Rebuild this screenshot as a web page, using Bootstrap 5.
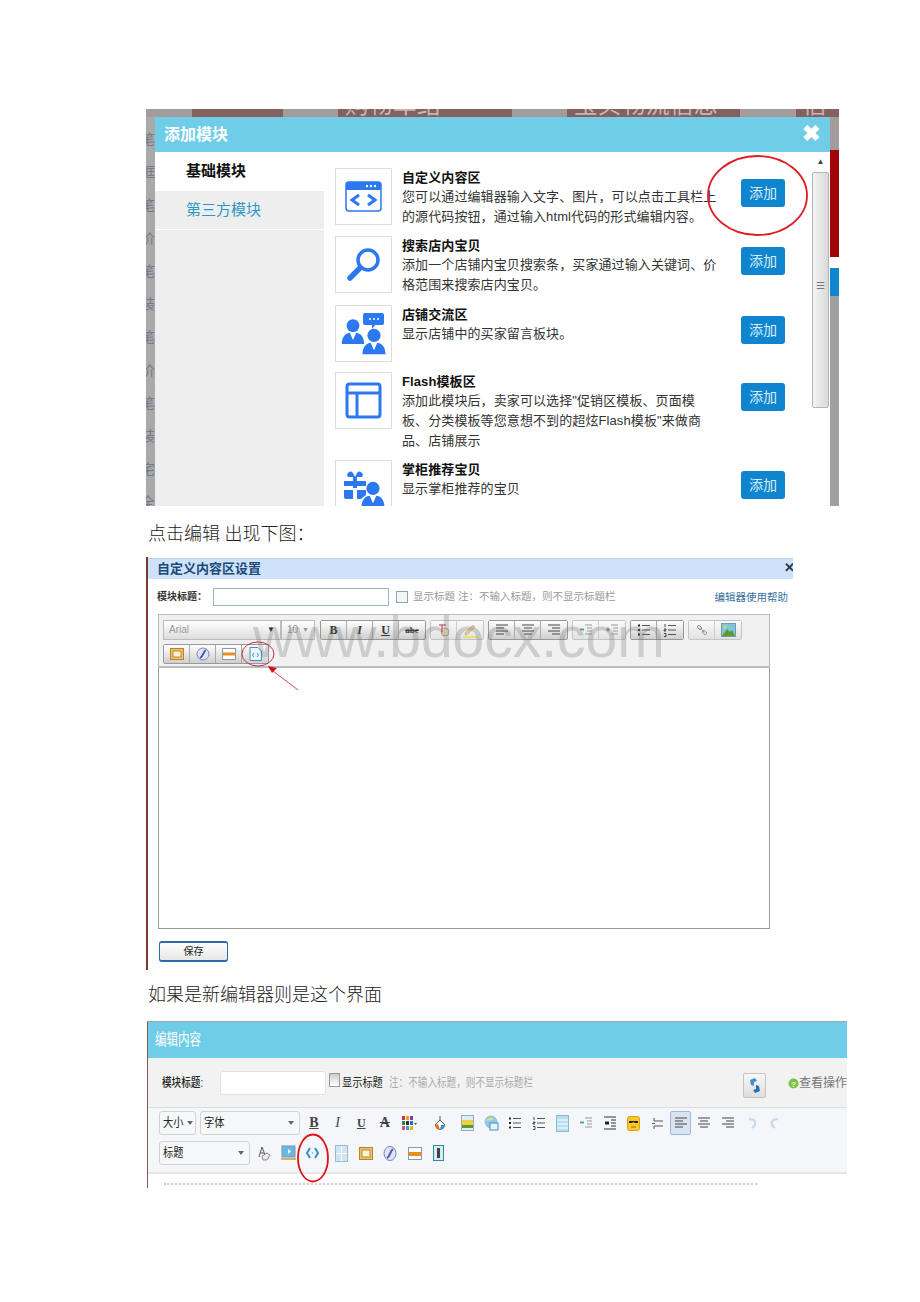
<!DOCTYPE html>
<html lang="zh-CN">

<head>
    <meta charset="UTF-8">
    <meta name="viewport" content="width=device-width, initial-scale=1.0">
    <title>添加模块</title>
    <link href="https://cdn.jsdelivr.net/npm/bootstrap@5.3.0/dist/css/bootstrap.min.css" rel="stylesheet">
    <style>
        body {
            background: #fff;
            color: #222;
            font-family: "Liberation Sans", "Noto Sans CJK SC", sans-serif;
            min-height: 1302px;
            padding-top: 109px;
        }
        .doc-line {
            margin: 0 0 0 148px;
            height: 24px;
            line-height: 24px;
            font-size: 18px;
            font-weight: 300;
            color: #222;
            font-family: "Liberation Serif", "Noto Sans CJK SC", serif;
        }

        /* first screenshot */
        .shot-add {
            position: relative;
            margin-left: 146px;
            width: 693px;
            height: 397px;
            overflow: hidden;
            background: #a8a8a8;
        }
        .back-top { height: 8px; overflow: hidden; }
        .back-top span { display: block; height: 8px; overflow: hidden; }
        .back-top b { display: block; margin-top: -16px; font-size: 24px; line-height: 24px; font-weight: 400; color: #c9b5b5; white-space: nowrap; }
        .seg-gray { background: #a49c9c; }
        .seg-brown { background: #846060; }
        .side-chars { width: 9px; overflow: hidden; font-size: 14px; line-height: 33px; color: #747a88; padding-top: 6px; background: #a9a9a9; }
        .side-chars div { margin-left: -5px; }
        .side-right { width: 9px; }
        .side-right i { display: block; }
        .add-modal { width: 675px; height: 389px; background: #fff; }
        .add-head { height: 35px; background: #6fcde8; color: #fff; font-size: 16px; font-weight: 700; line-height: 35px; padding-left: 9px; position: relative; }
        .add-close { position: absolute; right: 10px; top: 0; font-size: 22px; line-height: 33px; }
        .add-side { width: 169px; background: #eee; font-size: 15px; }
        .add-side div { padding-left: 31px; }
        .tab-on { height: 39px; line-height: 38px; background: #fff; font-weight: 700; color: #111; }
        .tab-off { height: 39px; line-height: 38px; color: #2b97c4; border-bottom: 1px solid #fff; }
        .mod-list { width: 488px; padding: 16px 0 0 11px; overflow: hidden; }
        .mod-row { width: 466px; }
        .mod-row.r1 { height: 68px; }
        .mod-row.r2 { height: 69px; }
        .mod-row.r3 { height: 67px; }
        .mod-row.r4 { height: 88px; }
        .mod-icon { width: 57px; height: 57px; flex: none; border: 1px solid #ddd; }
        .mod-text { width: 339px; flex: none; margin-left: 10px; font-size: 13px; line-height: 20px; letter-spacing: .1px; color: #333; }
        .mod-text strong { display: block; color: #111; line-height: 19px; }
        .mod-add.btn { width: 44px; height: 28px; flex: none; margin-top: 11px; padding: 0; border: 0; border-radius: 3px; background: #0f85cf; color: #d9eef9; font-size: 14px; line-height: 28px; }
        .scroll-col { width: 17px; margin-left: 0; background: #fff; }
        .scroll-up { height: 20px; font-size: 8px; line-height: 20px; text-align: center; color: #444; }
        .scroll-thumb { height: 236px; border: 1px solid #b5b5b5; border-radius: 2px; background: linear-gradient(90deg, #f4f4f4, #d9d9d9); font-size: 10px; text-align: center; }
        .scroll-thumb span { display: block; margin-top: 105px; color: #777; }
        .red-mark { position: absolute; overflow: visible; pointer-events: none; }

        /* second screenshot */
        .shot-old {
            position: relative;
            margin-left: 146px;
            width: 647px;
            height: 413px;
            overflow: hidden;
            border-left: 2px solid #7a3a30;
            font-size: 10px;
        }
        .old-head { height: 21px; margin-top: 1px; border-top: 1px solid #b8d4e4; background: #cfe2fb; padding-left: 9px; font-size: 13px; line-height: 20px; font-weight: 700; color: #1b4a78; }
        .old-close { position: absolute; right: -2px; top: 1px; font-size: 13px; font-weight: 700; line-height: 20px; color: #1b3a58; }
        .old-title { height: 35px; padding-left: 9px; }
        .old-label { font-weight: 700; font-size: 10px; color: #333; }
        .old-input { width: 176px; height: 18px; margin-left: 0; border: 1px solid #9db6c4; }
        .old-check { width: 12px; height: 12px; margin-left: 7px; border: 1px solid #8aa; background: #f6f6f6; }
        .old-hint { margin-left: 5px; color: #999; font-size: 10.5px; }
        .old-help { position: absolute; right: 5px; top: 33px; color: #36719e; font-size: 10.5px; }
        .old-tools { width: 612px; height: 54px; margin-left: 10px; padding: 5px 0 0 4px; background: #f1f1f1; border: 1px solid #bbb; border-bottom: 2px solid #bbb; }
        .tool-row { height: 20px; margin-bottom: 4px; }
        .old-select { height: 20px; border: 1px solid #bbb; background: linear-gradient(#fff, #ddd); color: #999; font-size: 10px; line-height: 18px; padding: 0 5px; }
        .old-select.s1 { width: 118px; }
        .old-select.s2 { width: 34px; margin-right: 5px; }
        .tool-group { height: 20px; margin-right: 4px; border: 1px solid #999; border-radius: 2px; }
        .tool-group.dim { border-color: #c4c4c4; }
        .tool-btn { width: 26px; height: 18px; background: linear-gradient(#fff, #cfcfcf); border-right: 1px solid #aaa; color: #333; font: 700 12px "Liberation Serif", serif; }
        .tool-btn:last-child { border-right: 0; }
        .dim .tool-btn { border-right-color: #ccc; background: linear-gradient(#fafafa, #e2e2e2); }
        .old-area { width: 612px; height: 261px; margin-left: 10px; border: 1px solid #999; border-top: 0; background: #fff; }
        .old-save.btn { display: block; width: 69px; height: 21px; margin: 12px 0 0 11px; padding: 0; border: 1px solid #2d6aa3; border-width: 2px 1px; border-radius: 3px; background: linear-gradient(#fff, #e6e6e6); color: #222; font-size: 10px; line-height: 17px; }
        .mark-text { position: absolute; left: 105px; top: 50px; font-size: 57px; line-height: 60px; color: rgba(110, 110, 110, .28); white-space: nowrap; pointer-events: none; }

        /* third screenshot */
        .shot-new {
            position: relative;
            margin-left: 147px;
            width: 700px;
            height: 167px;
            overflow: hidden;
            border-left: 1px solid #8a5a50;
            border-top: 1px solid #9aa;
        }
        /* the picture is squeezed sideways, so its text is narrow */
        .squeeze { display: inline-block; transform-origin: left center; white-space: nowrap; }
        .sq72 { transform: scaleX(.72); }
        .sq80 { transform: scaleX(.8); }
        .sq85 { transform: scaleX(.85); }
        .new-head { height: 36px; background: #70cde8; color: #fff; font-size: 16px; line-height: 35px; padding-left: 7px; }
        .new-title { height: 50px; background: #f2f2f2; border-bottom: 1px solid #d8dde2; padding-left: 14px; }
        .new-label { width: 58px; font-size: 12px; color: #222; font-weight: 500; }
        .new-input { width: 106px; height: 24px; background: #fff; border: 1px solid #e2e2e2; border-radius: 3px; }
        .new-check { width: 11px; height: 14px; margin: -5px 2px 0 3px; border: 1px solid #999; background: linear-gradient(#ccc, #fff); }
        .new-show { width: 48px; font-size: 12px; color: #222; }
        .new-note { margin-left: -1px; font-size: 12px; color: #aaa; }
        .new-sync { position: absolute; left: 595px; top: 51px; width: 23px; height: 25px; border: 1px solid #c4c4c4; border-radius: 2px; background: linear-gradient(#f8f8f8, #ddd); }
        .new-help { position: absolute; left: 640px; top: 52px; font-size: 12px; color: #777; white-space: nowrap; }
        .new-tools { height: 66px; background: #f4f6fa; border-bottom: 2px solid #e4e6ea; padding: 3px 0 0 11px; }
        .new-row { height: 24px; margin-bottom: 6px; }
        .new-select { height: 24px; margin-right: 4px; padding: 0 5px 0 3px; background: #f7f8fa; border: 1px solid #cfd2d6; border-radius: 3px; font-size: 12px; color: #222; }
        .new-select::after { content: ""; border: 3px solid transparent; border-top: 4px solid #666; border-bottom: 0; }
        .new-select.w36 { width: 37px; }
        .new-select.w100 { width: 100px; margin-right: 2px; }
        .new-select.w91 { width: 91px; margin-right: 2px; }
        .new-tool { width: 23.7px; height: 24px; flex: none; color: #444; font: 700 14px "Liberation Serif", serif; }
        .new-tool.sel { width: 21px; margin: 0 1px; background: #d9e3f2; border: 1px solid #9db7d8; border-radius: 2px; }
        .row-two .new-tool { width: 24.4px; }
        .new-area { height: 14px; background: #fff; padding: 9px 0 0 16px; }
        .new-dots { width: 593px; height: 2px; border-top: 2px dotted #cfcfcf; }
    </style>
</head>

<body>
    <svg width="0" height="0" class="d-block">
        <symbol id="i-lines-left" viewBox="0 0 14 14"><path d="M1 2h12M1 5h8M1 8h12M1 11h8" stroke="#444" fill="none"/></symbol>
        <symbol id="i-lines-center" viewBox="0 0 14 14"><path d="M1 2h12M3 5h8M1 8h12M3 11h8" stroke="#444" fill="none"/></symbol>
        <symbol id="i-lines-right" viewBox="0 0 14 14"><path d="M1 2h12M5 5h8M1 8h12M5 11h8" stroke="#444" fill="none"/></symbol>
        <symbol id="i-outdent" viewBox="0 0 14 14"><path d="M6 2h7M8 5h5M8 8h5M6 11h7" stroke="#999" fill="none"/><path d="M1 6.500h4" stroke="#5a8" stroke-width="2"/></symbol>
        <symbol id="i-indent" viewBox="0 0 14 14"><path d="M6 2h7M8 5h5M8 8h5M6 11h7" stroke="#999" fill="none"/><path d="M1 6.500h4M3 4.500v4" stroke="#5a8" stroke-width="1.500"/></symbol>
        <symbol id="i-bullets" viewBox="0 0 14 14"><path d="M5 2.500h8M5 7h8M5 11.500h8" stroke="#555" fill="none"/><path d="M1 1.500h2v2H1zM1 6h2v2H1zM1 10.500h2v2H1z" fill="#222"/></symbol>
        <symbol id="i-numbers" viewBox="0 0 14 14"><path d="M5 2.500h8M5 7h8M5 11.500h8" stroke="#555" fill="none"/><path d="M2 1v3M1 6h2v1H1v1h2M1 10.500h2v3H1" stroke="#222" stroke-width=".8" fill="none"/></symbol>
        <symbol id="i-person" viewBox="0 0 30 34"><circle cx="15" cy="9" r="8" fill="#2b78ef"/><path d="M1 32c0-10 6-14 10-14l4 9 4-9c4 0 10 4 10 14z" fill="#2b78ef"/></symbol>
    </svg>

    <!-- 添加模块 -->
    <div class="shot-add">
        <div class="back-top d-flex">
            <span class="seg-gray" style="width:46px"></span>
            <span class="seg-brown" style="width:91px"></span>
            <span class="seg-gray" style="width:55px"></span>
            <span class="seg-brown" style="width:174px"><b>&nbsp;购物车结</b></span>
            <span class="seg-gray" style="width:55px"></span>
            <span class="seg-brown" style="width:173px"><b>&nbsp;宝贝物流信息</b></span>
            <span class="seg-gray" style="width:56px"></span>
            <span class="seg-brown" style="width:43px"><b>&nbsp;信</b></span>
        </div>
        <div class="d-flex">
            <div class="side-chars">
                <div>笔</div><div>框</div><div>笔</div><div>价</div><div>笔</div><div>装</div><div>笔</div><div>价</div><div>笔</div><div>装</div><div>宅</div><div>全</div>
            </div>
            <div class="add-modal">
                <div class="add-head">添加模块<span class="add-close">✖</span></div>
                <div class="d-flex" style="height:354px">
                    <div class="add-side flex-none">
                        <div class="tab-on">基础模块</div>
                        <div class="tab-off">第三方模块</div>
                    </div>
                    <div class="mod-list">
                        <div class="mod-row r1 d-flex">
                            <div class="mod-icon d-flex align-items-center justify-content-center">
                                <svg width="37" height="31" viewBox="0 0 37 31"><rect x="1" y="1" width="35" height="29" rx="3" fill="#fff" stroke="#2b78ef" stroke-width="1.500"/><path d="M1 4a3 3 0 0 1 3-3h29a3 3 0 0 1 3 3v5H1z" fill="#2b78ef"/><circle cx="22" cy="5" r="1.200" fill="#fff"/><circle cx="26" cy="5" r="1.200" fill="#fff"/><circle cx="30" cy="5" r="1.200" fill="#fff"/><path d="M14 14l-7 5 7 5M23 14l7 5-7 5" fill="none" stroke="#2b78ef" stroke-width="3"/></svg>
                            </div>
                            <div class="mod-text"><strong>自定义内容区</strong>您可以通过编辑器输入文字、图片，可以点击工具栏上<br>的源代码按钮，通过输入html代码的形式编辑内容。</div>
                            <button class="btn mod-add">添加</button>
                        </div>
                        <div class="mod-row r2 d-flex">
                            <div class="mod-icon d-flex align-items-center justify-content-center">
                                <svg width="36" height="36" viewBox="0 0 36 36"><circle cx="22" cy="13" r="10" fill="none" stroke="#2b78ef" stroke-width="3.500"/><path d="M14 21L4 31" stroke="#2b78ef" stroke-width="5.500" stroke-linecap="round"/></svg>
                            </div>
                            <div class="mod-text"><strong>搜索店内宝贝</strong>添加一个店铺内宝贝搜索条，买家通过输入关键词、价<br>格范围来搜索店内宝贝。</div>
                            <button class="btn mod-add">添加</button>
                        </div>
                        <div class="mod-row r3 d-flex">
                            <div class="mod-icon d-flex align-items-center justify-content-center">
                                <svg width="46" height="44" viewBox="0 0 46 44"><use href="#i-person" x="0" y="6" width="24" height="28"/><use href="#i-person" x="20" y="16" width="26" height="28"/><path d="M24 1h17a2 2 0 0 1 2 2v8a2 2 0 0 1-2 2h-7l-3 4v-4h-7a2 2 0 0 1-2-2V3a2 2 0 0 1 2-2z" fill="#2b78ef"/><path d="M28 7h2M32 7h2M36 7h2" stroke="#fff" stroke-width="1.500"/></svg>
                            </div>
                            <div class="mod-text"><strong>店铺交流区</strong>显示店铺中的买家留言板块。</div>
                            <button class="btn mod-add">添加</button>
                        </div>
                        <div class="mod-row r4 d-flex">
                            <div class="mod-icon d-flex align-items-center justify-content-center">
                                <svg width="37" height="37" viewBox="0 0 37 37"><rect x="2" y="2" width="33" height="33" rx="2.500" fill="none" stroke="#2b78ef" stroke-width="3"/><path d="M2 11h33M12 11v24" stroke="#2b78ef" stroke-width="3"/></svg>
                            </div>
                            <div class="mod-text"><strong>Flash模板区</strong>添加此模块后，卖家可以选择"促销区模板、页面模<br>板、分类模板等您意想不到的超炫Flash模板"来做商<br>品、店铺展示</div>
                            <button class="btn mod-add">添加</button>
                        </div>
                        <div class="mod-row d-flex">
                            <div class="mod-icon d-flex align-items-center justify-content-center">
                                <svg width="44" height="40" viewBox="0 0 44 40"><path d="M2 12h9V8H6a3 3 0 1 1 5-4l2 4 2-4a3 3 0 1 1 5 4h-5v4h9v5h-9v2h-4v-2H2zM2 21h9v9H4a2 2 0 0 1-2-2zM15 21h9v5l-5 4h-4z" fill="#2b78ef"/><use href="#i-person" x="18" y="12" width="26" height="28"/></svg>
                            </div>
                            <div class="mod-text"><strong>掌柜推荐宝贝</strong>显示掌柜推荐的宝贝</div>
                            <button class="btn mod-add">添加</button>
                        </div>
                    </div>
                    <div class="scroll-col">
                        <div class="scroll-up">▲</div>
                        <div class="scroll-thumb"><span>☰</span></div>
                    </div>
                </div>
            </div>
            <div class="side-right">
                <i style="height:33px;background:#a49c9c"></i>
                <i style="height:107px;background:#a30404"></i>
                <i style="height:11px;background:#fff"></i>
                <i style="height:28px;background:#0f85cf"></i>
                <i style="height:210px;background:#a0a0a0"></i>
            </div>
        </div>
        <svg class="red-mark" style="left:561px;top:46px" width="101" height="81" viewBox="0 0 101 81"><ellipse cx="50.500" cy="40.500" rx="49.500" ry="39.500" fill="none" stroke="#e01b22" stroke-width="1.800"/></svg>
    </div>

    <p class="doc-line" style="margin-top:16px;margin-bottom:11px">点击编辑 出现下图：</p>

    <!-- 自定义内容区设置 -->
    <div class="shot-old">
        <div class="old-head">自定义内容区设置</div>
        <span class="old-close">✕</span>
        <div class="old-title d-flex align-items-center">
            <span class="old-label" style="width:56px">模块标题：</span>
            <span class="old-input"></span>
            <span class="old-check"></span>
            <span class="old-hint">显示标题 注：不输入标题，则不显示标题栏</span>
        </div>
        <span class="old-help">编辑器使用帮助</span>
        <div class="old-tools">
            <div class="tool-row d-flex">
                <div class="old-select s1 d-flex align-items-center justify-content-between"><span>Arial</span><span style="color:#222;font-size:8px">▼</span></div>
                <div class="old-select s2 d-flex align-items-center justify-content-between"><span>10</span><span style="font-size:7px">▼</span></div>
                <div class="tool-group d-flex">
                    <span class="tool-btn d-flex align-items-center justify-content-center">B</span>
                    <span class="tool-btn d-flex align-items-center justify-content-center fst-italic">I</span>
                    <span class="tool-btn d-flex align-items-center justify-content-center text-decoration-underline">U</span>
                    <span class="tool-btn d-flex align-items-center justify-content-center text-decoration-line-through" style="font-size:9px">abc</span>
                </div>
                <div class="tool-group dim d-flex">
                    <span class="tool-btn d-flex align-items-center justify-content-center"><svg width="14" height="14" viewBox="0 0 14 14"><circle cx="8" cy="9" r="4" fill="#f0e0c0" stroke="#b99"/><path d="M2 2h7M5 2v7" stroke="#b77" stroke-width="1.500"/></svg></span>
                    <span class="tool-btn d-flex align-items-center justify-content-center"><svg width="16" height="16" viewBox="0 0 16 16"><path d="M3 11l8-8 2 2-8 8H3z" fill="#ecc888" stroke="#cba"/><path d="M1 15h14" stroke="#e8e070" stroke-width="2"/></svg></span>
                </div>
                <div class="tool-group d-flex">
                    <span class="tool-btn d-flex align-items-center justify-content-center"><svg width="14" height="14"><use href="#i-lines-left"/></svg></span>
                    <span class="tool-btn d-flex align-items-center justify-content-center"><svg width="14" height="14"><use href="#i-lines-center"/></svg></span>
                    <span class="tool-btn d-flex align-items-center justify-content-center"><svg width="14" height="14"><use href="#i-lines-right"/></svg></span>
                </div>
                <div class="tool-group dim d-flex">
                    <span class="tool-btn d-flex align-items-center justify-content-center"><svg width="14" height="14"><use href="#i-outdent"/></svg></span>
                    <span class="tool-btn d-flex align-items-center justify-content-center"><svg width="14" height="14"><use href="#i-indent"/></svg></span>
                </div>
                <div class="tool-group d-flex">
                    <span class="tool-btn d-flex align-items-center justify-content-center"><svg width="14" height="14"><use href="#i-bullets"/></svg></span>
                    <span class="tool-btn d-flex align-items-center justify-content-center"><svg width="14" height="14"><use href="#i-numbers"/></svg></span>
                </div>
                <div class="tool-group dim d-flex">
                    <span class="tool-btn d-flex align-items-center justify-content-center"><svg width="14" height="14" viewBox="0 0 14 14"><path d="M2 4l2-2 3 3-2 2zM7 9l2-2 3 3-2 2z" fill="#ddd" stroke="#999"/><path d="M5 5l4 4" stroke="#c88"/></svg></span>
                    <span class="tool-btn d-flex align-items-center justify-content-center"><svg width="15" height="14" viewBox="0 0 15 14"><rect x=".5" y=".5" width="14" height="13" fill="#7bc8e0" stroke="#79a"/><path d="M1 13l5-7 3 3 2-2 3 6z" fill="#5c9a2c"/><circle cx="4" cy="4" r="1.500" fill="#f3d04a"/></svg></span>
                </div>
            </div>
            <div class="tool-row d-flex">
                <div class="tool-group d-flex">
                    <span class="tool-btn d-flex align-items-center justify-content-center"><svg width="14" height="12" viewBox="0 0 14 12"><rect x=".5" y=".5" width="13" height="11" fill="#f3c452" stroke="#b98425"/><rect x="3" y="3" width="8" height="6" fill="#fff4c8" stroke="#a87"/></svg></span>
                    <span class="tool-btn d-flex align-items-center justify-content-center"><svg width="14" height="14" viewBox="0 0 14 14"><circle cx="7" cy="7" r="6" fill="#dfe4f4" stroke="#7a86bb"/><path d="M4 11c3-1 3-6 6-8" fill="none" stroke="#4a5bb0" stroke-width="2"/></svg></span>
                    <span class="tool-btn d-flex align-items-center justify-content-center"><svg width="14" height="12" viewBox="0 0 14 12"><rect x=".5" y=".5" width="13" height="11" fill="#fff" stroke="#89a"/><path d="M1 6h12" stroke="#e98f1e" stroke-width="3"/></svg></span>
                    <span class="tool-btn d-flex align-items-center justify-content-center"><svg width="13" height="14" viewBox="0 0 13 14"><path d="M1 .5h8l3.500 3.500v9.500H1z" fill="#eaf6fb" stroke="#3f93c0"/><path d="M5 6L3.500 8 5 10M8 6l1.500 2L8 10" fill="none" stroke="#3f93c0"/></svg></span>
                </div>
            </div>
        </div>
        <div class="old-area"></div>
        <button class="btn old-save">保存</button>
        <span class="mark-text">www.bdocx.com</span>
        <svg class="red-mark" style="left:93px;top:84px" width="62" height="52" viewBox="0 0 62 52"><ellipse cx="17" cy="13" rx="16" ry="12" fill="none" stroke="#c9303a"/><path d="M57 49L28 27" stroke="#d44"/><path d="M27 25l9 2-5 5z" fill="#d4111a"/></svg>
    </div>

    <p class="doc-line" style="margin-top:13px;margin-bottom:14px">如果是新编辑器则是这个界面</p>

    <!-- 编辑内容 -->
    <div class="shot-new">
        <div class="new-head"><span class="squeeze sq72">编辑内容</span></div>
        <div class="new-title d-flex align-items-center">
            <span class="new-label"><span class="squeeze sq80">模块标题:</span></span>
            <span class="new-input"></span>
            <span class="new-check"></span>
            <span class="new-show"><span class="squeeze sq85">显示标题</span></span>
            <span class="new-note"><span class="squeeze sq80">注：不输入标题，则不显示标题栏</span></span>
        </div>
        <span class="new-sync d-flex align-items-center justify-content-center">
            <svg width="14" height="17" viewBox="0 0 14 17"><path d="M2 3l5-2 2 3-3 1v4L3 8z" fill="#3f8fcf"/><path d="M12 14l-5 2-2-3 3-1V8l3 1z" fill="#2a6fb5"/></svg>
        </span>
        <span class="new-help d-flex align-items-center"><svg width="11" height="11" viewBox="0 0 11 11"><circle cx="5.500" cy="5.500" r="5" fill="#7dc242"/><text x="5.500" y="8.500" font-size="8" font-weight="700" fill="#fff" text-anchor="middle">?</text></svg>查看操作教程</span>
        <div class="new-tools">
            <div class="new-row d-flex">
                <div class="new-select w36 d-flex align-items-center justify-content-between"><span class="squeeze sq85">大小</span></div>
                <div class="new-select w100 d-flex align-items-center justify-content-between"><span class="squeeze sq85">字体</span></div>
                <span class="new-tool d-flex align-items-center justify-content-center text-decoration-underline">B</span>
                <span class="new-tool d-flex align-items-center justify-content-center fst-italic fw-normal">I</span>
                <span class="new-tool d-flex align-items-center justify-content-center text-decoration-underline" style="font-size:12px">U</span>
                <span class="new-tool d-flex align-items-center justify-content-center text-decoration-line-through">A</span>
                <span class="new-tool d-flex align-items-center justify-content-center"><svg width="16" height="16" viewBox="0 0 16 16"><path d="M1 1h3v4H1z" fill="#c33"/><path d="M5 1h3v4H5z" fill="#e8a020"/><path d="M9 1h3v4H9z" fill="#7a3fa0"/><path d="M1 6h3v4H1z" fill="#2a8a4a"/><path d="M5 6h3v4H5z" fill="#333"/><path d="M9 6h3v4H9z" fill="#2a6fc0"/><path d="M1 11h3v4H1z" fill="#e04a80"/><path d="M5 11h3v4H5z" fill="#40a0c0"/><path d="M9 11h3v4H9z" fill="#d8c020"/><path d="M13 8h3l-1.500 2z" fill="#555"/></svg></span>
                <span class="new-tool d-flex align-items-center justify-content-center ms-2"><svg width="16" height="17" viewBox="0 0 16 17"><path d="M8 1v5M3 10l5-5 5 5-5 5z" fill="#fff" stroke="#555"/><path d="M3 10a5 5 0 0 0 5 5l-2-6z" fill="#e0701e"/><path d="M8 15a5 5 0 0 0 5-5H9z" fill="#3f8fcf"/></svg></span>
                <span class="new-tool d-flex align-items-center justify-content-center ms-1"><svg width="13" height="16" viewBox="0 0 13 16"><rect x=".5" y=".5" width="12" height="15" fill="#dfeef6" stroke="#9ab"/><path d="M1 5h11v5H1z" fill="#e8d24a"/><path d="M1 10h11v3H1z" fill="#5c9a2c"/></svg></span>
                <span class="new-tool d-flex align-items-center justify-content-center"><svg width="15" height="16" viewBox="0 0 15 16"><circle cx="7" cy="7" r="6.500" fill="#8fc8ea"/><path d="M2 6c2-4 6-4 8-2-2 1-5 2-8 2z" fill="#e8e070"/><rect x="6" y="8" width="8" height="7" fill="#e8f2f8" stroke="#3f8fcf"/></svg></span>
                <span class="new-tool d-flex align-items-center justify-content-center"><svg width="14" height="14"><use href="#i-bullets"/></svg></span>
                <span class="new-tool d-flex align-items-center justify-content-center"><svg width="14" height="14"><use href="#i-numbers"/></svg></span>
                <span class="new-tool d-flex align-items-center justify-content-center"><svg width="13" height="17" viewBox="0 0 13 17"><rect x=".5" y=".5" width="12" height="16" fill="#b8def2" stroke="#8bc"/><path d="M1 5h11M1 9h11M1 13h11" stroke="#fff"/></svg></span>
                <span class="new-tool d-flex align-items-center justify-content-center"><svg width="14" height="14"><use href="#i-outdent"/></svg></span>
                <span class="new-tool d-flex align-items-center justify-content-center"><svg width="14" height="14" viewBox="0 0 14 14"><path d="M1 1h12M8 4h5M8 7h5M8 10h5M1 13h12" stroke="#333"/><path d="M2 7h4" stroke="#222" stroke-width="3"/></svg></span>
                <span class="new-tool d-flex align-items-center justify-content-center"><svg width="13" height="15" viewBox="0 0 13 15"><rect x=".5" y=".5" width="12" height="14" rx="2" fill="#f7c829" stroke="#e0a010"/><path d="M2 5h9v2H8L6.500 6 5 7H2z" fill="#222"/><path d="M4 11h5" stroke="#b06010"/></svg></span>
                <span class="new-tool d-flex align-items-center justify-content-center"><svg width="13" height="13" viewBox="0 0 13 13"><path d="M3 1v3h9M3 12V9h9M1 6.500h3" fill="none" stroke="#555"/></svg></span>
                <span class="new-tool sel d-flex align-items-center justify-content-center"><svg width="14" height="14"><use href="#i-lines-left"/></svg></span>
                <span class="new-tool d-flex align-items-center justify-content-center"><svg width="14" height="14"><use href="#i-lines-center"/></svg></span>
                <span class="new-tool d-flex align-items-center justify-content-center"><svg width="14" height="14"><use href="#i-lines-right"/></svg></span>
                <span class="new-tool d-flex align-items-center justify-content-center"><svg width="10" height="13" viewBox="0 0 10 13"><path d="M2 2l5 1c2 3 1 6-2 8" fill="none" stroke="#c4d8ec" stroke-width="2"/></svg></span>
                <span class="new-tool d-flex align-items-center justify-content-center"><svg width="10" height="13" viewBox="0 0 10 13"><path d="M8 2L3 3C1 6 2 9 5 11" fill="none" stroke="#c4d8ec" stroke-width="2"/></svg></span>
            </div>
            <div class="new-row row-two d-flex">
                <div class="new-select w91 d-flex align-items-center justify-content-between"><span class="squeeze sq85">标题</span></div>
                <span class="new-tool d-flex align-items-center justify-content-center"><svg width="14" height="16" viewBox="0 0 14 16"><path d="M2 12L5 2l3 8M3 8h4" fill="none" stroke="#555"/><path d="M5 11l5-3 3 2-3 5H6z" fill="#eee" stroke="#888"/></svg></span>
                <span class="new-tool d-flex align-items-center justify-content-center"><svg width="15" height="17" viewBox="0 0 15 17"><rect x="1" y="1" width="13" height="11" fill="#6ab8e2" stroke="#79b"/><path d="M7 4l3 2.500L7 9z" fill="#fff"/><path d="M0 14h15" stroke="#d8b060" stroke-width="2"/></svg></span>
                <span class="new-tool d-flex align-items-center justify-content-center"><svg width="13" height="12" viewBox="0 0 13 12"><path d="M4 1L1 6l3 5M9 1l3 5-3 5" fill="none" stroke="#2f8fd0" stroke-width="2"/><path d="M6 6h1" stroke="#2f8fd0"/></svg></span>
                <span class="new-tool d-flex align-items-center justify-content-center ms-1"><svg width="13" height="17" viewBox="0 0 13 17"><rect x=".5" y=".5" width="12" height="16" fill="#cfe6f4" stroke="#9bc"/><path d="M6.500 1v15M1 8.500h11" stroke="#fff"/></svg></span>
                <span class="new-tool d-flex align-items-center justify-content-center"><svg width="14" height="13" viewBox="0 0 14 13"><rect x=".5" y=".5" width="13" height="12" fill="#f3c452" stroke="#b98425"/><rect x="3" y="3" width="8" height="7" fill="#fff4c8" stroke="#a87"/></svg></span>
                <span class="new-tool d-flex align-items-center justify-content-center"><svg width="14" height="15" viewBox="0 0 14 15"><ellipse cx="7" cy="7.500" rx="6" ry="7" fill="#dfe4f4" stroke="#7a86bb"/><path d="M4 12c3-1 3-7 6-9" fill="none" stroke="#4a5bb0" stroke-width="2"/></svg></span>
                <span class="new-tool d-flex align-items-center justify-content-center"><svg width="14" height="13" viewBox="0 0 14 13"><rect x=".5" y=".5" width="13" height="12" fill="#fff" stroke="#89a"/><path d="M1 7h12" stroke="#e98f1e" stroke-width="4"/></svg></span>
                <span class="new-tool d-flex align-items-center justify-content-center"><svg width="11" height="16" viewBox="0 0 11 16"><rect x=".5" y=".5" width="10" height="15" fill="#d6ecf4" stroke="#2f8a9c"/><rect x="4" y="3" width="3" height="10" fill="#444"/></svg></span>
            </div>
        </div>
        <div class="new-area"><div class="new-dots"></div></div>
        <svg class="red-mark" style="left:149px;top:111px" width="34" height="50" viewBox="0 0 34 50"><ellipse cx="16" cy="25" rx="15" ry="23.500" fill="none" stroke="#e01015" stroke-width="1.800"/></svg>
    </div>

    <script src="https://cdn.jsdelivr.net/npm/bootstrap@5.3.0/dist/js/bootstrap.bundle.min.js"></script>
</body>

</html>
